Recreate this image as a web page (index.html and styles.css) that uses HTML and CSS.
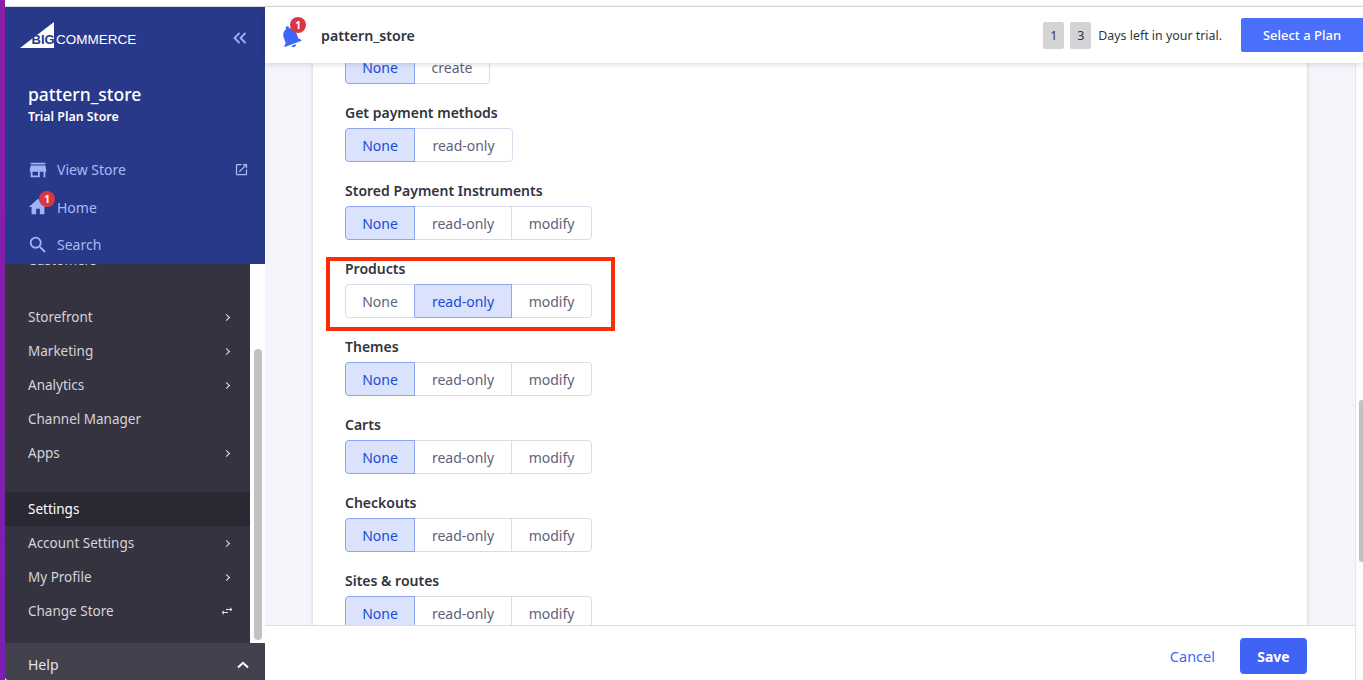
FILE: index.html
```html
<!DOCTYPE html>
<html lang="en">
<head>
<meta charset="utf-8">
<title>pattern_store</title>
<link rel="stylesheet" href="styles.css">
</head>
<body>
<div class="rail"></div>
<div class="shell">
  <div class="top-strip"></div>
  <div class="app">
    <aside class="sidebar">
      <div class="side-head">
        <div class="logo-row">
          <svg class="logo" viewBox="0 0 116 28" width="116" height="28"><path d="M0 26 34 0V26Z" fill="#fff"/><text x="11.500" y="22" class="logo-big">BIG</text><text x="36" y="22" class="logo-com">COMMERCE</text></svg>
          <svg class="collapse" viewBox="0 0 14 12" width="14" height="12"><path d="M6.500 1 1.500 6l5 5M12.500 1l-5 5 5 5" fill="none" stroke="#9db1f5" stroke-width="1.800"/></svg>
        </div>
        <div class="store-name">pattern_store</div>
        <div class="store-plan">Trial Plan Store</div>
        <ul class="head-links">
          <li class="head-link">
            <svg class="head-icon" viewBox="0 0 24 24"><path d="M20 4H4v2h16V4zm1 10v-2l-1-5H4l-1 5v2h1v6h10v-6h4v6h2v-6h1zm-9 4H6v-4h6v4z"/></svg>
            <span class="head-text">View Store</span>
            <svg class="ext-icon" viewBox="0 0 24 24"><path d="M19 19H5V5h7V3H5a2 2 0 0 0-2 2v14a2 2 0 0 0 2 2h14c1.100 0 2-.9 2-2v-7h-2v7zM14 3v2h3.590l-9.830 9.830 1.410 1.410L19 6.410V10h2V3h-7z"/></svg>
          </li>
          <li class="head-link">
            <svg class="head-icon" viewBox="0 0 24 24"><path d="M10 20v-6h4v6h5v-8h3L12 3 2 12h3v8z"/></svg>
            <span class="badge badge-side">1</span>
            <span class="head-text">Home</span>
          </li>
          <li class="head-link">
            <svg class="head-icon" viewBox="0 0 24 24"><path d="M15.500 14h-.79l-.28-.27A6.470 6.470 0 0 0 16 9.500 6.500 6.500 0 1 0 9.500 16c1.610 0 3.090-.59 4.230-1.570l.27.28v.79l5 4.990L20.490 19l-4.990-5zm-6 0C7.010 14 5 11.990 5 9.500S7.010 5 9.500 5 14 7.010 14 9.500 11.990 14 9.500 14z"/></svg>
            <span class="head-text">Search</span>
          </li>
        </ul>
      </div>
      <div class="side-mid">
        <nav class="side-nav">
          <ul class="nav-group nav-first">
            <li class="nav-item">Customers</li>
          </ul>
          <ul class="nav-group">
            <li class="nav-item">Storefront<span class="chev"></span></li>
            <li class="nav-item">Marketing<span class="chev"></span></li>
            <li class="nav-item">Analytics<span class="chev"></span></li>
            <li class="nav-item">Channel Manager</li>
            <li class="nav-item">Apps<span class="chev"></span></li>
          </ul>
          <ul class="nav-group">
            <li class="nav-item nav-active">Settings</li>
            <li class="nav-item">Account Settings<span class="chev"></span></li>
            <li class="nav-item">My Profile<span class="chev"></span></li>
            <li class="nav-item">Change Store
              <svg class="swap" viewBox="0 0 12 8" width="12" height="8"><path d="M11 2.500H5M9 .7 11 2.500 9 4M1 5.500h6M3 4 1 5.500 3 7.300" fill="none" stroke="#e4e4ea" stroke-width="1"/></svg>
            </li>
          </ul>
        </nav>
        <div class="side-scroll"><div class="side-thumb"></div></div>
      </div>
      <div class="help">Help
        <svg class="help-chev" viewBox="0 0 12 8" width="12" height="8"><path d="M1 6.500 6 1.800l5 4.700" fill="none" stroke="#fff" stroke-width="2"/></svg>
      </div>
    </aside>
    <div class="main">
      <header class="topbar">
        <div class="bell-wrap">
          <svg class="bell" viewBox="0 0 24 24"><path d="M12 22c1.100 0 2-.9 2-2h-4c0 1.100.9 2 2 2zm6-6v-5c0-3.070-1.630-5.640-4.500-6.320V4c0-.83-.67-1.500-1.500-1.500s-1.500.67-1.500 1.500v.68C7.640 5.360 6 7.920 6 11v5l-2 2v1h16v-1l-2-2z"/></svg>
          <span class="badge badge-bell">1</span>
        </div>
        <div class="top-store">pattern_store</div>
        <div class="trial">
          <span class="digit">1</span>
          <span class="digit">3</span>
          <span class="trial-text">Days left in your trial.</span>
          <button class="plan-btn">Select a Plan</button>
        </div>
      </header>
      <div class="main-body">
        <div class="main-col">
          <div class="content">
            <section class="card">
              <div class="field field-first">
                <div class="seg">
                  <span class="opt opt-none on">None</span><span class="opt opt-create">create</span>
                </div>
              </div>
              <div class="field">
                <div class="label">Get payment methods</div>
                <div class="seg">
                  <span class="opt opt-none on">None</span><span class="opt opt-read">read-only</span>
                </div>
              </div>
              <div class="field">
                <div class="label">Stored Payment Instruments</div>
                <div class="seg">
                  <span class="opt opt-none on">None</span><span class="opt opt-read">read-only</span><span class="opt opt-mod">modify</span>
                </div>
              </div>
              <div class="field">
                <div class="label">Products</div>
                <div class="seg">
                  <span class="opt opt-none">None</span><span class="opt opt-read on">read-only</span><span class="opt opt-mod">modify</span>
                </div>
                <div class="red-box"></div>
              </div>
              <div class="field">
                <div class="label">Themes</div>
                <div class="seg">
                  <span class="opt opt-none on">None</span><span class="opt opt-read">read-only</span><span class="opt opt-mod">modify</span>
                </div>
              </div>
              <div class="field">
                <div class="label">Carts</div>
                <div class="seg">
                  <span class="opt opt-none on">None</span><span class="opt opt-read">read-only</span><span class="opt opt-mod">modify</span>
                </div>
              </div>
              <div class="field">
                <div class="label">Checkouts</div>
                <div class="seg">
                  <span class="opt opt-none on">None</span><span class="opt opt-read">read-only</span><span class="opt opt-mod">modify</span>
                </div>
              </div>
              <div class="field">
                <div class="label">Sites &amp; routes</div>
                <div class="seg">
                  <span class="opt opt-none on">None</span><span class="opt opt-read">read-only</span><span class="opt opt-mod">modify</span>
                </div>
              </div>
            </section>
          </div>
          <footer class="footer">
            <a class="cancel">Cancel</a>
            <button class="save">Save</button>
          </footer>
        </div>
        <div class="page-scroll"><div class="page-thumb"></div></div>
      </div>
    </div>
  </div>
</div>
</body>
</html>
```
FILE: styles.css
```css
* { box-sizing: border-box; }
html, body { height: 100%; }
body {
  margin: 0;
  display: flex;
  height: 680px;
  overflow: hidden;
  background: #fff;
  font-family: "Noto Sans", "Open Sans", sans-serif;
  font-size: 14px;
  color: #313440;
}
ul { list-style: none; margin: 0; padding: 0; }

.rail {
  flex: 0 0 5px;
  background: linear-gradient(180deg, #8a1fa8 0%, #7a1fb0 100%);
}
.shell { flex: 1; min-width: 0; display: flex; flex-direction: column; }
.top-strip { flex: 0 0 7px; background: #fff; border-bottom: 1px solid #dcdce0; }
.app { flex: 1; min-height: 0; display: flex; }

/* Sidebar */
.sidebar {
  flex: 0 0 260px;
  display: flex;
  flex-direction: column;
  background: #353340;
  border-bottom-left-radius: 4px;
  overflow: hidden;
}
.side-head {
  flex: 0 0 257px;
  background: #28398a;
  padding: 15px 16px 0 15px;
  position: relative;
  z-index: 2;
}
.logo-row { display: flex; align-items: flex-start; justify-content: space-between; height: 28px; }
.logo { display: block; overflow: visible; }
.logo-big { font: 700 13px "Liberation Sans", sans-serif; fill: #28398a; }
.logo-com { font: 400 13.5px "Liberation Sans", sans-serif; fill: #fff; }
.collapse { margin: 10px 2px 0 0; }
.store-name {
  margin: 32px 0 0 8px;
  font-size: 17.500px;
  line-height: 24px;
  font-weight: 500;
  color: #fff;
}
.store-plan {
  margin: 1px 0 0 8px;
  font-size: 12.400px;
  line-height: 20px;
  font-weight: 600;
  color: #fff;
}
.head-links { margin: 24px 0 0 0; }
.head-link {
  position: relative;
  display: flex;
  align-items: center;
  height: 37.500px;
  padding-left: 7px;
  color: #a9b9f4;
}
.head-icon { width: 22px; height: 22px; fill: #9fb3f6; flex: none; }
.head-text { margin-left: 8px; font-size: 14px; }
.ext-icon { width: 15px; height: 15px; fill: #a9b9f4; margin-left: auto; }
.badge {
  position: absolute;
  display: flex;
  align-items: center;
  justify-content: center;
  width: 16px;
  height: 16px;
  border-radius: 50%;
  background: #db3643;
  color: #fff;
  font-size: 10px;
  font-weight: 700;
}
.badge-side { left: 19px; top: 2px; }

.side-mid { flex: 1; min-height: 0; display: flex; }
.side-nav { flex: 1; min-width: 0; overflow: hidden; }
.nav-group { margin-bottom: 22px; }
.nav-first { margin-top: -21px; margin-bottom: 23px; }
.nav-item {
  display: flex;
  align-items: center;
  justify-content: space-between;
  height: 34px;
  padding: 0 18px 0 23px;
  font-size: 13.500px;
  color: #d4d4dc;
}
.nav-active { background: #2a2933; color: #fff; }
.chev {
  width: 5px;
  height: 5px;
  margin-right: 3px;
  border-top: 1px solid #e4e4ea;
  border-right: 1px solid #e4e4ea;
  transform: rotate(45deg);
}
.swap { margin-right: -1px; }
.side-scroll {
  flex: 0 0 15px;
  background: #fdfdfd;
  padding: 85px 3px 3px 4px;
}
.side-thumb { height: 291px; width: 8px; border-radius: 4px; background: #c1c1c1; }
.help {
  flex: 0 0 37px;
  display: flex;
  align-items: center;
  justify-content: space-between;
  padding: 6px 16px 0 23px;
  background: #42414e;
  color: #e2e2e8;
  font-size: 14px;
}

/* Main */
.main { flex: 1; min-width: 0; display: flex; flex-direction: column; }
.topbar {
  flex: 0 0 56px;
  display: flex;
  align-items: center;
  background: #fff;
  box-shadow: 0 1px 6px rgba(40, 44, 70, .18);
  position: relative;
  z-index: 2;
  padding-left: 12px;
}
.bell-wrap { position: relative; width: 27px; height: 27px; margin-right: 17px; margin-top: 2px; }
.bell { width: 27px; height: 27px; fill: #3f66f5; transform: rotate(-20deg); display: block; }
.badge-bell { left: 13px; top: -6px; }
.top-store { font-size: 14.200px; font-weight: 600; color: #313440; }
.trial { margin-left: auto; display: flex; align-items: center; }
.digit {
  display: flex;
  align-items: center;
  justify-content: center;
  width: 21px;
  height: 27px;
  margin-right: 6px;
  background: #d4d4d6;
  border-radius: 2px;
  font-size: 12.500px;
  color: #313440;
}
.trial-text { margin-left: 1px; margin-right: 19px; font-size: 12.400px; color: #313440; }
.plan-btn {
  width: 122px;
  height: 34px;
  border: 0;
  border-radius: 2px 0 0 2px;
  background: #4a6ffb;
  color: #fff;
  font: 500 13px "Noto Sans", sans-serif;
}

.main-body { flex: 1; min-height: 0; display: flex; }
.main-col { flex: 1; min-width: 0; display: flex; flex-direction: column; }
.content {
  flex: 1;
  min-height: 0;
  overflow: hidden;
  background: #f4f5fb;
  padding: 0 48px;
}
.card {
  background: #fff;
  min-height: 640px;
  padding: 0 32px;
  box-shadow: 0 0 4px rgba(40, 44, 70, .2);
}
.field { position: relative; height: 78px; padding-top: 15px; }
.field-first { height: 38px; margin-top: -13px; padding-top: 0; }
.label {
  font-size: 14px;
  line-height: 20px;
  font-weight: 600;
  color: #313440;
}
.seg {
  display: inline-flex;
  margin-top: 5px;
  border: 1px solid #d9dcea;
  border-radius: 4px;
  height: 34px;
}
.field-first .seg { margin-top: 0; }
.opt {
  display: flex;
  align-items: center;
  justify-content: center;
  height: 100%;
  font-size: 14px;
  color: #5e637a;
  border-right: 1px solid #d9dcea;
}
.opt:last-child { border-right: 0; }
.opt-none { width: 69px; }
.opt-read { width: 97px; }
.opt-mod { width: 79px; }
.opt-create { width: 74px; }
.on {
  background: #dbe3fc;
  color: #1a4bd8;
  border-right-color: #8ea6f4;
  box-shadow: 0 -1px 0 #8ea6f4, 0 1px 0 #8ea6f4, -1px 0 0 #8ea6f4;
  position: relative;
}
.opt-none.on { border-radius: 3px 0 0 3px; }
.red-box {
  position: absolute;
  left: -19px;
  top: 13px;
  width: 289px;
  height: 74px;
  border: 4px solid #fa2c0a;
  pointer-events: none;
}

.footer {
  flex: 0 0 55px;
  display: flex;
  align-items: center;
  justify-content: flex-end;
  padding: 6px 48px 0 0;
  background: #fff;
  border-top: 1px solid #dcdde8;
  position: relative;
  z-index: 2;
}
.cancel { margin-right: 25px; font-size: 14.500px; color: #3f66f5; }
.save {
  width: 67px;
  height: 36px;
  border: 0;
  border-radius: 4px;
  background: #3f63f5;
  color: #fff;
  font: 700 14px "Noto Sans", sans-serif;
}
.page-scroll { flex: 0 0 8px; background: #fdfdfd; border-left: 1px solid #e6e6ea; padding: 337px 0 0 3px; }
.page-thumb { height: 162px; background: #c1c1c1; border-radius: 3px 0 0 3px; }
```
